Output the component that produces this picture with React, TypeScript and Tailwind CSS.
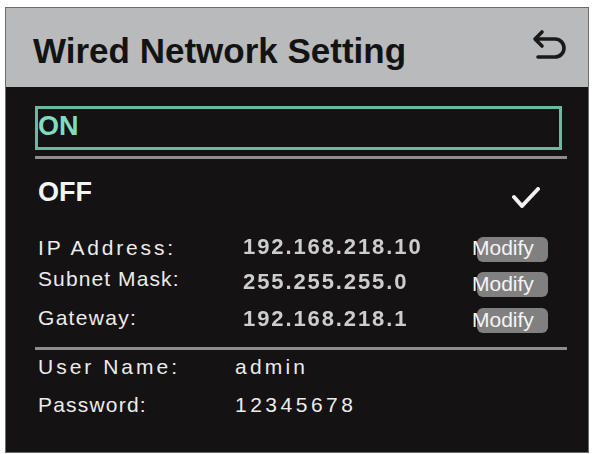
import React from 'react'

type NetRow = {
  label: string
  value: string
  h: string
  labelClass: string
  btnClass: string
}

const netRows: NetRow[] = [
  { label: 'IP Address:', value: '192.168.218.10', h: 'h-[42px]', labelClass: 'tracking-[2.8px]', btnClass: 'mt-[4px]' },
  { label: 'Subnet Mask:', value: '255.255.255.0', h: 'h-[28px]', labelClass: 'tracking-[1.1px] -mt-[8px]', btnClass: 'mt-[5px]' },
  { label: 'Gateway:', value: '192.168.218.1', h: 'h-[46px]', labelClass: 'tracking-[1.3px] -mt-[4px]', btnClass: 'mt-[3px]' },
]

function BackIcon() {
  return (
    <svg width="40" height="34" viewBox="0 0 40 34" fill="none" className="-mt-[1px]">
      <path
        d="M11 3 L4 10 L11 17 M4 10 H24 A9 9 0 0 1 24 28 H7"
        stroke="#1a1a1a"
        strokeWidth="3.6"
        strokeLinecap="round"
        strokeLinejoin="round"
      />
    </svg>
  )
}

function CheckIcon() {
  return (
    <svg width="30" height="24" viewBox="0 0 30 24" fill="none" className="ml-auto mr-[26px] mt-[11px] blur-[0.4px]">
      <path d="M3 11 L11 20 L27 3" stroke="#f2f2f2" strokeWidth="4" strokeLinecap="round" strokeLinejoin="round" />
    </svg>
  )
}

export default function App() {
  return (
    <div className="w-[592px] h-[454px] bg-white pt-[7px] pl-[5px] pr-[3px] pb-[1px] font-['Liberation_Sans',Arial,sans-serif]">
      <div className="h-full flex flex-col border border-[#6b6b6b] bg-[#141213]">
        {/* header */}
        <div className="h-[79px] bg-[#b8babc] flex items-start justify-between pt-[22px] pl-[27px] pr-[17px]">
          <h1 className="text-[35px] leading-[40px] font-bold text-[#131313] mt-[1px]">Wired Network Setting</h1>
          <BackIcon />
        </div>

        {/* body */}
        <div className="flex-1 flex flex-col pt-[19px] pl-[29px] pr-[21px]">
          <div className="h-[44px] mr-[5px] border-[3px] border-[#67bca0]">
            <span className="block text-[27px] leading-[34px] font-bold text-[#7fdcbf]">ON</span>
          </div>
          <div className="mt-[6px] h-[3px] bg-[#8d8d8d]" />

          <div className="h-[67px] flex items-center pl-[3px]">
            <span className="text-[27px] leading-none font-bold text-[#f4f4f4]">OFF</span>
            <CheckIcon />
          </div>

          {netRows.map((row) => (
            <div key={row.label} className={`${row.h} flex items-center pl-[3px]`}>
              <span className={`w-[205px] text-[21px] leading-none text-[#ececec] ${row.labelClass}`}>{row.label}</span>
              <span className="w-[229px] text-[22px] leading-none font-bold tracking-[1.9px] text-[#cdcdcd] blur-[0.6px]">
                {row.value}
              </span>
              <button className={`w-[71px] h-[25px] rounded-[6px] bg-[#808080] flex items-center ml-[5px] ${row.btnClass}`}>
                <span className="-ml-[5px] -mt-[3px] text-[21px] leading-none text-[#f4f4f4]">Modify</span>
              </button>
            </div>
          ))}

          <div className="mt-[5px] h-[3px] bg-[#8d8d8d]" />

          <div className="h-[33px] flex items-center pl-[3px] text-[21px] leading-none text-[#ececec]">
            <span className="w-[197px] tracking-[3px]">User Name:</span>
            <span className="tracking-[3.2px]">admin</span>
          </div>
          <div className="h-[42px] flex items-center pl-[3px] text-[21px] leading-none text-[#ececec]">
            <span className="w-[197px] tracking-[1.2px]">Password:</span>
            <span className="tracking-[3.5px]">12345678</span>
          </div>
        </div>
      </div>
    </div>
  )
}
